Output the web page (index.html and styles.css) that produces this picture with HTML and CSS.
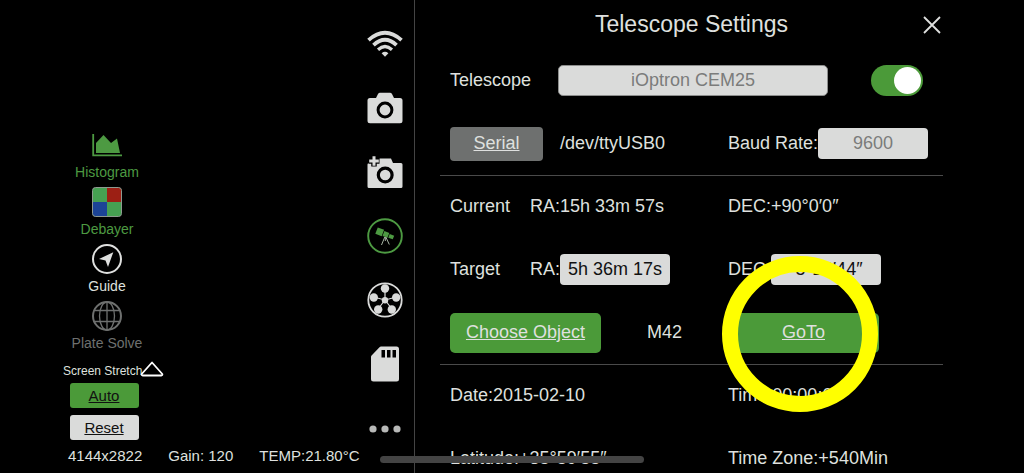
FILE: index.html
```html
<!DOCTYPE html>
<html lang="en">
<head>
<meta charset="utf-8">
<meta name="viewport" content="width=device-width, initial-scale=1">
<title>Telescope Settings</title>
<link rel="stylesheet" href="styles.css">
</head>
<body>
<div class="app">
  <main class="preview">
    <div class="tools">
      <button class="tool tool-on" type="button">
        <svg class="tool-icon" viewBox="0 0 30 30" aria-hidden="true"><path d="M1.200 4v21.300H30" fill="none" stroke="currentColor" stroke-width="1.800"/><path d="M4 23V13L11.500 5l7.500 8 6-4.500L28 23z" fill="currentColor"/></svg>
        <span>Histogram</span>
      </button>
      <button class="tool tool-on" type="button">
        <svg class="tool-icon" viewBox="0 0 30 30" aria-hidden="true"><clipPath id="tile"><rect x="0.500" y="0.500" width="29" height="29" rx="3"/></clipPath><g clip-path="url(#tile)"><path fill="#46a052" d="M0 0h30v30H0z"/><path fill="#9c1f14" d="M15 0h15v15H15z"/><path fill="#1c4496" d="M0 15h15v15H0z"/></g><rect x="0.500" y="0.500" width="29" height="29" rx="3" fill="none" stroke="#8f9a90"/></svg>
        <span>Debayer</span>
      </button>
      <button class="tool" type="button">
        <svg class="tool-icon" viewBox="0 0 30 30" aria-hidden="true"><circle cx="15" cy="15" r="14" fill="none" stroke="currentColor" stroke-width="2"/><path d="M21.300 8.200 7 15l6.500 1.500L16 23z" fill="currentColor"/></svg>
        <span>Guide</span>
      </button>
      <button class="tool tool-off" type="button">
        <svg class="tool-icon" viewBox="0 0 30 30" fill="none" stroke="currentColor" aria-hidden="true"><circle cx="15" cy="15" r="14" stroke-width="2"/><ellipse cx="15" cy="15" rx="7.500" ry="14" stroke-width="1.300"/><path d="M15 1v28M3 9.500h24M3 20.500h24" stroke-width="1.300"/></svg>
        <span>Plate Solve</span>
      </button>
      <div class="stretch">
        <span>Screen Stretch</span>
        <button class="stretch-toggle" type="button" aria-label="Collapse screen stretch">
          <svg viewBox="0 0 24 16" width="24" height="16" aria-hidden="true"><path d="M12 1.500 22.300 13q.4 1.500-1 1.500H2.700q-1.400 0-1-1.500z" fill="#000" stroke="#fff" stroke-width="1.800" stroke-linejoin="round"/></svg>
        </button>
      </div>
      <button class="small-btn small-btn-green" type="button">Auto</button>
      <button class="small-btn" type="button">Reset</button>
    </div>
    <div class="status">
      <span>4144x2822</span>
      <span>Gain: 120</span>
      <span>TEMP:21.80°C</span>
    </div>
  </main>

  <nav class="rail" aria-label="Devices">
    <button class="rail-btn" type="button" aria-label="Wi-Fi">
      <svg viewBox="0 0 36 36" aria-hidden="true"><g fill="none" stroke="currentColor" stroke-width="3.800"><path d="M1.500 14.200Q18-.5 34.500 14.200"/><path d="M6.500 19.200Q18 8.500 29.500 19.200"/><path d="M11 23.700Q18 17.300 25 23.700" stroke-width="3.200"/></g><path d="M14.600 27.200Q18 24.400 21.400 27.200L18 30.700z" fill="currentColor"/></svg>
    </button>
    <button class="rail-btn" type="button" aria-label="Main camera">
      <svg viewBox="0 0 36 36" aria-hidden="true"><path d="M3 8h6l2-4q.7-1.200 2-1.200h10q1.300 0 2 1.200l2 4h6q2.500 0 2.500 2.500v20.300q0 2.500-2.500 2.500H3Q.5 33.300.5 30.800V10.500Q.5 8 3 8z" fill="currentColor"/><circle cx="18" cy="20" r="6.900" fill="none" stroke="#000" stroke-width="3"/></svg>
    </button>
    <button class="rail-btn" type="button" aria-label="Guide camera">
      <svg viewBox="0 0 36 36" aria-hidden="true"><path d="M2 9h8l2.500-4.500H24l2 4.500h8q1.500 0 1.500 1.500v22Q35.500 34 34 34H2Q.5 34 .5 32.500v-22Q.5 9 2 9z" fill="currentColor"/><circle cx="18.200" cy="21" r="6.900" fill="none" stroke="#000" stroke-width="3.200"/><path d="M7 1v11.500M1.500 7h11" stroke="#000" stroke-width="5.500"/><path d="M7 2.200v9.600M2.200 7h9.600" stroke="currentColor" stroke-width="3"/></svg>
    </button>
    <button class="rail-btn rail-btn-on" type="button" aria-label="Telescope" aria-current="true">
      <svg viewBox="0 0 36 36" aria-hidden="true"><circle cx="18" cy="18" r="16.800" fill="none" stroke="currentColor" stroke-width="1.900"/><g transform="rotate(21 18 17)" fill="currentColor"><path d="M8.500 12.500h6.800v6.800H8.500zM16 13.500h5.300v5.300H16zM22 14.300h4.800v4H22z"/></g><path d="m17.800 19-3.300 8M18.800 19l3.500 7.500M18.300 19v4" fill="none" stroke="#a8b5a5" stroke-width="1"/></svg>
    </button>
    <button class="rail-btn" type="button" aria-label="Filter wheel">
      <svg viewBox="0 0 36 36" fill="currentColor" aria-hidden="true"><circle cx="18" cy="18" r="16.700" fill="none" stroke="currentColor" stroke-width="1.800"/><path d="M18 18V7M18 18 6.500 15M18 18l11.500-3M18 18l-7 9M18 18l7 9" stroke="currentColor" stroke-width="1.200"/><circle cx="18" cy="18.300" r="3.200"/><circle cx="18" cy="6.500" r="4.200"/><circle cx="6.800" cy="15.500" r="4.200"/><circle cx="29.200" cy="15.500" r="4.200"/><circle cx="11.200" cy="27.500" r="4.200"/><circle cx="24.800" cy="27.500" r="4.200"/></svg>
    </button>
    <button class="rail-btn" type="button" aria-label="Storage card">
      <svg viewBox="0 0 36 36" aria-hidden="true"><path d="M14 .5h15.500q2.500 0 2.500 2.500v30q0 2.500-2.500 2.500h-23Q4 35.500 4 33V11q0-1 .8-1.800L12.500 1.200Q13.100.5 14 .5z" fill="currentColor"/><path d="M14.500 4h3.500v7.500h-3.500zM20 4h3.500v7.500H20zM25.500 4H29v7.500h-3.500z" fill="#000"/></svg>
    </button>
    <button class="rail-btn rail-btn-dim" type="button" aria-label="More">
      <svg viewBox="0 0 36 36" fill="currentColor" aria-hidden="true"><circle cx="6" cy="19" r="3.600"/><circle cx="18" cy="19" r="3.600"/><circle cx="30" cy="19" r="3.600"/></svg>
    </button>
  </nav>

  <section class="panel" aria-labelledby="panel-title">
    <header class="panel-head">
      <h1 class="panel-title" id="panel-title">Telescope Settings</h1>
      <button class="close" type="button" aria-label="Close">
        <svg viewBox="0 0 18 18" width="18" height="18" aria-hidden="true"><path d="m1 1 16 16M17 1 1 17" fill="none" stroke="currentColor" stroke-width="1.800"/></svg>
      </button>
    </header>
    <div class="row row-device">
      <label for="device">Telescope</label>
      <input class="field field-muted field-outlined" id="device" type="text" value="iOptron CEM25">
      <input class="switch" type="checkbox" role="switch" aria-label="Connect telescope" checked>
    </div>
    <div class="row row-ruled">
      <div class="group">
        <button class="btn btn-grey" type="button">Serial</button>
        <span>/dev/ttyUSB0</span>
      </div>
      <div class="pair">
        <label for="baud">Baud Rate:</label>
        <input class="field field-short field-muted" id="baud" type="text" value="9600">
      </div>
    </div>
    <div class="row">
      <div class="pair"><span class="name">Current</span><span>RA:15h 33m 57s</span></div>
      <span>DEC:+90°0′0″</span>
    </div>
    <div class="row">
      <div class="pair">
        <span class="name">Target</span>
        <label for="ra">RA:</label>
        <input class="field field-short" id="ra" type="text" value="5h 36m 17s">
      </div>
      <div class="pair">
        <label for="dec">DEC:</label>
        <input class="field field-short" id="dec" type="text" value="-5°23′44″">
      </div>
    </div>
    <div class="row row-ruled">
      <div class="group group-wide">
        <button class="btn btn-green" type="button">Choose Object</button>
        <span>M42</span>
      </div>
      <div class="goto">
        <button class="btn btn-green" type="button">GoTo</button>
        <span class="ring"></span>
      </div>
    </div>
    <div class="row">
      <span>Date:2015-02-10</span>
      <span>Time:00:00:00</span>
    </div>
    <div class="row">
      <span>Latitude:+35°59′55″</span>
      <span>Time Zone:+540Min</span>
    </div>
  </section>
  <div class="home-bar"></div>
</div>
</body>
</html>
```

FILE: styles.css
```css
* {
  box-sizing: border-box;
}

body {
  margin: 0;
  background: #000;
  color: #dfe0df;
  font-family: "Liberation Sans", Arial, sans-serif;
  font-size: 18px;
}

button,
input {
  margin: 0;
  padding: 0;
  border: 0;
  background: none;
  color: inherit;
  font: inherit;
}

button {
  cursor: pointer;
}

svg {
  display: block;
}

.app {
  position: relative;
  display: grid;
  grid-template-columns: minmax(0, 356fr) 59px minmax(0, 609fr);
  height: 100vh;
  overflow: hidden;
}

/* Preview side */
.preview {
  display: flex;
  flex-direction: column;
  justify-content: flex-end;
  gap: 7px;
  padding-bottom: 8px;
}

.tools {
  display: flex;
  flex-direction: column;
  align-items: center;
  gap: 7px;
  width: 88px;
  margin-left: 63px;
}

.tool {
  display: flex;
  flex-direction: column;
  align-items: center;
  gap: 5px;
  font-size: 14px;
  line-height: 15px;
  white-space: nowrap;
}

.tool-icon {
  width: 30px;
  height: 30px;
}

.tool-on {
  color: #4d9a42;
}

.tool-off {
  color: #6e706f;
}

.stretch {
  position: relative;
  align-self: stretch;
  margin-bottom: -2px;
  padding-top: 6px;
  font-size: 12px;
  line-height: 14px;
}

.stretch-toggle {
  position: absolute;
  right: -13px;
  bottom: 1px;
}

.small-btn {
  width: 69px;
  height: 25px;
  margin-right: 6px;
  border-radius: 3px;
  background: #dadbda;
  color: #111;
  font-size: 15px;
  text-decoration: underline;
}

.small-btn-green {
  background: #4b9a39;
}

.status {
  display: flex;
  gap: 26px;
  padding-left: 68px;
  font-size: 15px;
  line-height: 18px;
  white-space: nowrap;
}

/* Device rail */
.rail {
  display: flex;
  flex-direction: column;
  padding-top: 12px;
  border-right: 1px solid #444;
}

.rail-btn {
  display: grid;
  flex: none;
  place-items: center;
  height: 64px;
  color: #dadbda;
}

.rail-btn svg {
  width: 36px;
  height: 36px;
}

.rail-btn-on {
  color: #4d9a42;
}

.rail-btn-dim {
  color: #b8b9b8;
}

/* Settings panel */
.panel {
  padding: 0 81px 0 25px;
  overflow: hidden;
}

.panel-head {
  display: grid;
  grid-template-columns: 20px 1fr 20px;
  align-items: center;
  height: 49px;
}

.panel-title {
  grid-column: 2;
  margin: 0;
  font-size: 23px;
  font-weight: 400;
  text-align: center;
}

.row {
  display: grid;
  grid-template-columns: 278fr 215fr;
  align-items: center;
  height: 63px;
  padding-left: 10px;
  white-space: nowrap;
}

.row-ruled {
  box-shadow: 0 1px #4a4a4a;
}

.row-device {
  grid-template-columns: 108fr 270fr 115fr;
}

.pair,
.group {
  display: flex;
  align-items: center;
}

.group {
  gap: 17px;
}

.group-wide {
  gap: 46px;
}

.name {
  width: 80px;
}

.field {
  width: 100%;
  height: 31px;
  border-radius: 4px;
  background: #dadbda;
  color: #111;
  text-align: center;
}

.field-short {
  width: 110px;
}

.field-muted {
  color: #7b7c7b;
}

.field-outlined {
  border: 1px solid #8c8d8c;
  border-radius: 5px;
}

.switch {
  width: 52px;
  height: 31px;
  margin-left: 43px;
  padding: 2px;
  border-radius: 16px;
  background: #4b9a39;
  appearance: none;
}

.switch::before {
  display: block;
  width: 27px;
  height: 27px;
  border-radius: 50%;
  background: #fff;
  content: "";
}

.switch:checked::before {
  margin-left: auto;
}

.btn {
  width: 151px;
  height: 40px;
  border-radius: 5px;
  text-decoration: underline;
}

.btn-green {
  background: #4b9a39;
}

.btn-grey {
  width: 93px;
  height: 34px;
  border-radius: 4px;
  background: #6e706f;
}

.goto {
  position: relative;
}

.ring {
  position: absolute;
  top: 50%;
  left: -6px;
  width: 156px;
  height: 156px;
  margin-top: -77px;
  border: 16px solid #ff0;
  border-radius: 50%;
  pointer-events: none;
}

.home-bar {
  position: absolute;
  bottom: 10px;
  left: 50%;
  width: 264px;
  height: 7px;
  border-radius: 4px;
  background: #444;
  transform: translateX(-50%);
}
```
